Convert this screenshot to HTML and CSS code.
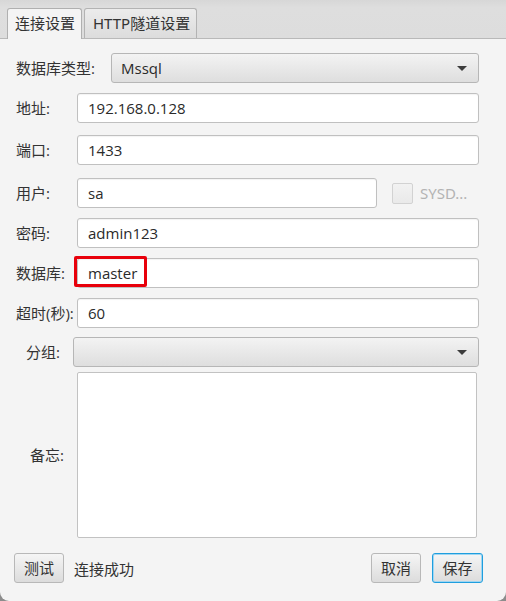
FILE: index.html
```html
<!DOCTYPE html>
<html lang="zh-CN">
<head>
<meta charset="utf-8">
<title>连接设置</title>
<link rel="stylesheet" href="styles.css">
</head>
<body>
<div class="window">
  <div class="tabbar">
    <div class="tab tab-active">连接设置</div>
    <div class="tab">HTTP隧道设置</div>
  </div>
  <div class="content">
    <div class="form">
      <div class="row">
        <label class="lbl lbl-wide">数据库类型:</label>
        <div class="combo"><span class="combo-text">Mssql</span><span class="arrow"></span></div>
      </div>
      <div class="row">
        <label class="lbl">地址:</label>
        <div class="field">192.168.0.128</div>
      </div>
      <div class="row">
        <label class="lbl">端口:</label>
        <div class="field">1433</div>
      </div>
      <div class="row">
        <label class="lbl">用户:</label>
        <div class="field field-short">sa</div>
        <span class="checkbox"></span>
        <span class="check-label">SYSD...</span>
      </div>
      <div class="row">
        <label class="lbl">密码:</label>
        <div class="field">admin123</div>
      </div>
      <div class="row">
        <label class="lbl">数据库:</label>
        <div class="field field-marked">master<span class="highlight"></span></div>
      </div>
      <div class="row">
        <label class="lbl">超时(秒):</label>
        <div class="field">60</div>
      </div>
      <div class="row">
        <label class="lbl lbl-group">分组:</label>
        <div class="combo"><span class="combo-text"></span><span class="arrow"></span></div>
      </div>
      <div class="row row-memo">
        <label class="lbl lbl-memo">备忘:</label>
        <div class="memo"></div>
      </div>
    </div>
    <div class="footer">
      <button class="btn">测试</button>
      <span class="status">连接成功</span>
      <span class="spacer"></span>
      <button class="btn">取消</button>
      <button class="btn btn-default">保存</button>
    </div>
  </div>
</div>
</body>
</html>
```

FILE: styles.css
```css
* { box-sizing: border-box; }

html, body {
  margin: 0;
  padding: 0;
  background: #8c8c8c;
}

body {
  width: 506px;
  height: 601px;
  overflow: hidden;
  font-family: "Open Sans", "Noto Sans CJK SC", sans-serif;
  font-size: 15px;
  color: #2f2f2f;
}

.window {
  width: 506px;
  height: 601px;
  background: #f4f4f4;
  border-radius: 0 0 9px 9px;
  overflow: hidden;
  display: flex;
  flex-direction: column;
}

.tabbar {
  height: 39px;
  background: linear-gradient(#d7d7d7, #dedede 20%, #dddddd);
  border-bottom: 1px solid #b9b9b9;
  display: flex;
  align-items: flex-end;
  padding-left: 7px;
  gap: 2px;
  flex: none;
}

.tab {
  height: 30px;
  border: 1px solid #b3b3b3;
  border-bottom: none;
  border-radius: 3px 3px 0 0;
  background: linear-gradient(#ececec, #dcdcdc);
  padding: 0 6px 0 8px;
  line-height: 28px;
  font-family: "Noto Sans", "Noto Sans CJK SC", sans-serif;
  font-size: 15px;
  color: #333;
  white-space: nowrap;
}

.tab-active {
  height: 31px;
  margin-bottom: -1px;
  background: #f4f4f4;
  border-color: #b0b0b0;
  padding: 0 7px 0 7px;
  width: 75px;
}

.content {
  flex: 1;
  display: flex;
  flex-direction: column;
  padding: 14px 27px 0 16px;
}

.form {
  display: grid;
  grid-template-rows: 40px 42px 43px 40px 40px 40px 39px 35px 166px;
  align-items: start;
}

.row {
  display: flex;
  align-items: center;
  height: 30px;
}

.row-memo {
  height: 166px;
}

.lbl {
  flex: none;
  width: 61px;
  color: #333;
  white-space: nowrap;
  line-height: 20px;
}

.lbl-wide { width: 95px; }
.lbl-group { width: 57px; padding-left: 10px; }
.lbl-memo { width: 61px; padding-left: 14px; }

.field {
  position: relative;
  flex: 1;
  height: 30px;
  background: #fff;
  border: 1px solid #c0c0c0;
  border-radius: 3px;
  box-shadow: inset 0 1px 1px rgba(0,0,0,0.05);
  padding: 0 10px;
  line-height: 28px;
  color: #2a2a2a;
}

.field-short {
  flex: none;
  width: 300px;
}

.highlight {
  position: absolute;
  left: -4px;
  top: -3px;
  width: 73px;
  height: 31px;
  border: 3px solid #e8000b;
  border-radius: 2px;
}

.checkbox {
  flex: none;
  width: 21px;
  height: 21px;
  margin-left: 15px;
  border: 1px solid #d2d2d2;
  border-radius: 2px;
  background: linear-gradient(#f2f2f2, #e9e9e9);
}

.check-label {
  margin-left: 7px;
  color: #b3b3b3;
  font-family: "Noto Sans", sans-serif;
  white-space: nowrap;
}

.combo {
  flex: 1;
  height: 30px;
  border: 1px solid #b6b6b6;
  border-radius: 3px;
  background: linear-gradient(#f3f3f3, #dedede);
  display: flex;
  align-items: center;
  padding: 0 11px 0 9px;
}

.combo-text {
  flex: 1;
  line-height: 28px;
  color: #2a2a2a;
}

.arrow {
  width: 0;
  height: 0;
  border-left: 5px solid transparent;
  border-right: 5px solid transparent;
  border-top: 5px solid #3c3c3c;
}

.memo {
  flex: none;
  width: 400px;
  height: 166px;
  background: #fff;
  border: 1px solid #c2c2c2;
  border-radius: 2px;
}

.footer {
  display: flex;
  align-items: center;
  padding-top: 15px;
  margin-left: -2px;
  margin-right: -4px;
}

.btn {
  height: 30px;
  width: 50px;
  padding: 0;
  border: 1px solid #b8b8b8;
  border-radius: 3px;
  background: linear-gradient(#f5f5f5, #dcdcdc);
  font-family: "Noto Sans CJK SC", sans-serif;
  font-size: 15px;
  color: #333;
  line-height: 28px;
}

.status {
  margin-left: 10px;
  color: #333;
  font-family: "Noto Sans CJK SC", sans-serif;
}

.spacer { flex: 1; }

.btn + .btn { margin-left: 11px; }

.btn-default {
  width: 51px;
  border: 1px solid #1f9ede;
  box-shadow: inset 0 0 0 1px #9fd6f2;
}
```
